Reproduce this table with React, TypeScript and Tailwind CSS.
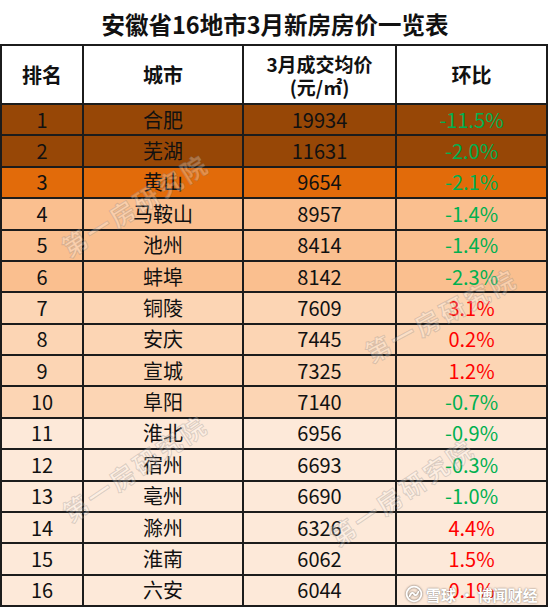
import React from "react";

type Row = { rank: number; city: string; price: string; chg: string; up: boolean; bg: string };

const rows: Row[] = [
  { rank: 1, city: "合肥", price: "19934", chg: "-11.5%", up: false, bg: "bg-[#974706]" },
  { rank: 2, city: "芜湖", price: "11631", chg: "-2.0%", up: false, bg: "bg-[#974706]" },
  { rank: 3, city: "黄山", price: "9654", chg: "-2.1%", up: false, bg: "bg-[#e26b0a]" },
  { rank: 4, city: "马鞍山", price: "8957", chg: "-1.4%", up: false, bg: "bg-[#fabf8f]" },
  { rank: 5, city: "池州", price: "8414", chg: "-1.4%", up: false, bg: "bg-[#fabf8f]" },
  { rank: 6, city: "蚌埠", price: "8142", chg: "-2.3%", up: false, bg: "bg-[#fabf8f]" },
  { rank: 7, city: "铜陵", price: "7609", chg: "3.1%", up: true, bg: "bg-[#fcd5b4]" },
  { rank: 8, city: "安庆", price: "7445", chg: "0.2%", up: true, bg: "bg-[#fcd5b4]" },
  { rank: 9, city: "宣城", price: "7325", chg: "1.2%", up: true, bg: "bg-[#fcd5b4]" },
  { rank: 10, city: "阜阳", price: "7140", chg: "-0.7%", up: false, bg: "bg-[#fcd5b4]" },
  { rank: 11, city: "淮北", price: "6956", chg: "-0.9%", up: false, bg: "bg-[#fde9d9]" },
  { rank: 12, city: "宿州", price: "6693", chg: "-0.3%", up: false, bg: "bg-[#fde9d9]" },
  { rank: 13, city: "亳州", price: "6690", chg: "-1.0%", up: false, bg: "bg-[#fde9d9]" },
  { rank: 14, city: "滁州", price: "6326", chg: "4.4%", up: true, bg: "bg-[#fde9d9]" },
  { rank: 15, city: "淮南", price: "6062", chg: "1.5%", up: true, bg: "bg-[#fde9d9]" },
  { rank: 16, city: "六安", price: "6044", chg: "0.1%", up: true, bg: "bg-[#fde9d9]" },
];

const font = "font-['Noto_Sans_CJK_SC','Noto_Sans',sans-serif]";

function Watermark({ x, y, angle }: { x: number; y: number; angle: number }) {
  return (
    <span
      className="absolute -translate-x-1/2 -translate-y-1/2 whitespace-nowrap text-[25px] font-bold tracking-[3px] text-[rgba(255,255,255,0.25)] [-webkit-text-stroke:1px_rgba(110,110,110,0.25)] pointer-events-none"
      style={{ left: x, top: y, transform: `rotate(${angle}deg)` }}
    >
      第一房研究院
    </span>
  );
}

export default function App() {
  return (
    <div className={`relative w-[550px] h-[612px] bg-white overflow-hidden ${font}`}>
      <div className="h-[44px] flex items-center justify-center pt-[6px] text-[23.5px] font-bold text-[#111] leading-none">
        安徽省16地市3月新房房价一览表
      </div>
      <div className="w-[548px] bg-[#1c1c1c] p-[2px] grid grid-cols-[80px_158px_151px_149px] grid-rows-[57px_repeat(16,29.375px)] gap-[2px]">
        <div className="bg-white flex items-center justify-center text-[20px] font-bold text-[#111]">排名</div>
        <div className="bg-white flex items-center justify-center text-[20px] font-bold text-[#111]">城市</div>
        <div className="bg-white flex flex-col items-center justify-center text-[19px] font-bold text-[#111] leading-[23px]">
          <span>3月成交均价</span>
          <span>(元/㎡)</span>
        </div>
        <div className="bg-white flex items-center justify-center text-[20px] font-bold text-[#111]">环比</div>
        {rows.map((r) => (
          <React.Fragment key={r.rank}>
            <div className={`${r.bg} flex items-center justify-center text-[20px] text-[#111]`}>{r.rank}</div>
            <div className={`${r.bg} flex items-center justify-center text-[20px] text-[#111]`}>{r.city}</div>
            <div className={`${r.bg} flex items-center justify-center text-[20px] text-[#111]`}>{r.price}</div>
            <div
              className={`${r.bg} flex items-center justify-center text-[20px] ${r.up ? "text-[#ff0000]" : "text-[#00b050]"}`}
            >
              {r.chg}
            </div>
          </React.Fragment>
        ))}
      </div>

      <Watermark x={135} y={205} angle={-32} />
      <Watermark x={441} y={315} angle={-28} />
      <Watermark x={135} y={468} angle={-34} />
      <Watermark x={402} y={492} angle={-34} />

      <div className="absolute left-[405px] top-[585px] flex items-center gap-[3px] whitespace-nowrap text-[15px] font-bold text-white leading-none [text-shadow:0_0_2px_rgba(0,0,0,0.55)]">
        <svg width="18" height="18" viewBox="0 0 20 20" className="[filter:drop-shadow(0_0_1px_rgba(0,0,0,0.6))]">
          <circle cx="10" cy="10" r="8.2" fill="none" stroke="white" strokeWidth="2" />
          <path d="M5 12.5 C7 8, 9 8, 10 10 S13 12, 15 7.5" fill="none" stroke="white" strokeWidth="2" strokeLinecap="round" />
        </svg>
        <span>雪球 · 博闻财经</span>
      </div>
    </div>
  );
}
